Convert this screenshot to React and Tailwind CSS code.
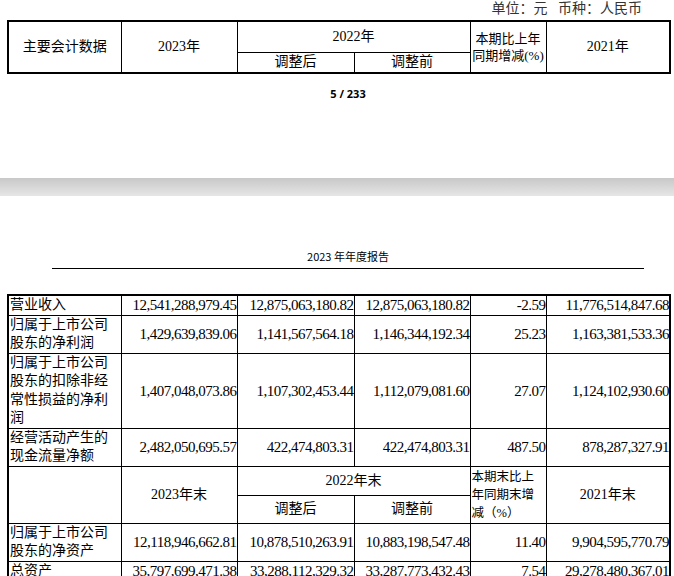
export default function App() {
  const f = { fontFamily: '"Liberation Serif","Noto Sans CJK SC",serif' };
  const cols = [113, 116, 117, 116, 76, 124];
  const Col = () => (<colgroup>{cols.map((w, i) => <col key={i} style={{ width: w }} />)}</colgroup>);
  const td = "border border-black px-0.5 align-middle";
  const lab = "border border-black px-px align-middle text-left [text-align:justify] break-all leading-[18.5px] text-[14px]";
  const num = "border border-black pr-0 pl-0 text-right align-middle whitespace-nowrap text-[15px] tracking-[-0.5px]";
  const rows = [
    ["营业收入", "12,541,288,979.45", "12,875,063,180.82", "12,875,063,180.82", "-2.59", "11,776,514,847.68", 19],
    ["归属于上市公司股东的净利润", "1,429,639,839.06", "1,141,567,564.18", "1,146,344,192.34", "25.23", "1,163,381,533.36", 37],
    ["归属于上市公司股东的扣除非经常性损益的净利润", "1,407,048,073.86", "1,107,302,453.44", "1,112,079,081.60", "27.07", "1,124,102,930.60", 75],
    ["经营活动产生的现金流量净额", "2,482,050,695.57", "422,474,803.31", "422,474,803.31", "487.50", "878,287,327.91", 38],
  ];
  const rows2 = [
    ["归属于上市公司股东的净资产", "12,118,946,662.81", "10,878,510,263.91", "10,883,198,547.48", "11.40", "9,904,595,770.79", 38],
    ["总资产", "35,797,699,471.38", "33,288,112,329.32", "33,287,773,432.43", "7.54", "29,278,480,367.01", 18],
  ];
  const R = (r, i) => (
    <tr key={i} style={{ height: r[6] }}>
      <td className={lab}>{r[0]}</td>
      {r.slice(1, 6).map((v, j) => <td key={j} className={num}>{v}</td>)}
    </tr>
  );
  return (
    <div className="w-[674px] h-[576px] bg-white text-black text-[14px] relative overflow-hidden" style={f}>
      <div className="h-[20px] flex justify-end pr-[32px] text-[14px] leading-[18px] text-[#333]">单位：元&nbsp;&nbsp;&nbsp;币种：人民币</div>
      <table className="ml-[7px] border-collapse border-2 border-black table-fixed text-center leading-[18px]" style={{ width: 662 }}>
        <Col />
        <tbody>
          <tr style={{ height: 31 }}>
            <td rowSpan={2} className={td}>主要会计数据</td>
            <td rowSpan={2} className={td}>2023年</td>
            <td colSpan={2} className={td}>2022年</td>
            <td rowSpan={2} className="border border-black px-0 align-middle text-[13px] leading-[17px]">本期比上年同期增减(%)</td>
            <td rowSpan={2} className={td}>2021年</td>
          </tr>
          <tr style={{ height: 21 }}>
            <td className={td}>调整后</td>
            <td className={td}>调整前</td>
          </tr>
        </tbody>
      </table>
      <div className="text-center text-[11px] font-bold mt-[12px] ml-[22px]" style={{ fontFamily: '"Open Sans",sans-serif' }}>5 / 233</div>
      <div className="absolute left-0 right-0 top-[178px] h-[18px] bg-[linear-gradient(#c8c8c8,#e6e6e6)]" />
      <div className="absolute left-[52px] w-[592px] top-[248px] border-b border-black text-center text-[11px] pb-[3px]" style={{ fontFamily: '"Noto Sans CJK SC",sans-serif' }}>2023 年年度报告</div>
      <table className="absolute left-[7px] top-[294px] border-collapse border-2 border-black table-fixed leading-[18px]" style={{ width: 662 }}>
        <Col />
        <tbody>
          {rows.map(R)}
          <tr style={{ height: 29 }}>
            <td rowSpan={2} className={td}></td>
            <td rowSpan={2} className={td + " text-center"}>2023年末</td>
            <td colSpan={2} className={td + " text-center"}>2022年末</td>
            <td rowSpan={2} className="border border-black px-px align-middle text-left [text-align:justify] break-all text-[12.5px] leading-[18px]">本期末比上年同期末增减（%）</td>
            <td rowSpan={2} className={td + " text-center"}>2021年末</td>
          </tr>
          <tr style={{ height: 28 }}>
            <td className={td + " text-center"}>调整后</td>
            <td className={td + " text-center"}>调整前</td>
          </tr>
          {rows2.map(R)}
        </tbody>
      </table>
    </div>
  );
}
